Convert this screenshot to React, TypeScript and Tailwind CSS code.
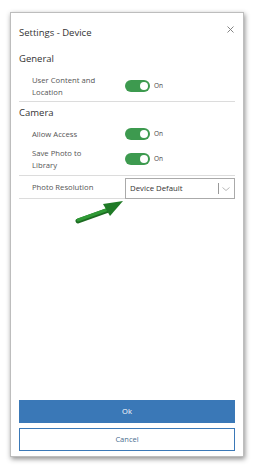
import React from "react";

const Toggle = () => (
  <div className="flex items-center gap-[4px]">
    <div className="w-[25px] h-[12px] rounded-full bg-[#3d9a4f] flex items-center justify-end pr-[2px]">
      <div className="w-[8px] h-[8px] rounded-full bg-white" />
    </div>
    <span className="text-[6.5px] text-[#444]">On</span>
  </div>
);

export default function App() {
  return (
    <div className="w-[254px] h-[469px] bg-white pt-[12px] pl-[10px] font-['Open_Sans',sans-serif]">
      <div className="relative w-[234px] h-[445px] bg-white border border-[#bdbdbd] shadow-[1px_2px_5px_rgba(0,0,0,0.45)] flex flex-col px-[8px]">
        {/* header */}
        <div className="flex items-start justify-between pt-[13px]">
          <span className="text-[9.5px] leading-[14px] text-[#333]">Settings - Device</span>
          <svg width="7" height="7" viewBox="0 0 7 7" className="mt-[0px] mr-[1px]">
            <path d="M0.5 0.5L6.5 6.5M6.5 0.5L0.5 6.5" stroke="#777" strokeWidth="0.9" />
          </svg>
        </div>

        <div className="mt-[12px] text-[9.5px] leading-[14px] text-[#333]">General</div>

        <div className="mt-[8px] pb-[3px] flex items-center border-b border-[#dcdcdc]">
          <div className="w-[106px] pl-[13px] text-[7.7px] leading-[12px] text-[#555]">
            User Content and
            <br />
            Location
          </div>
          <Toggle />
        </div>

        <div className="mt-[4px] text-[9.5px] leading-[14px] text-[#333]">Camera</div>

        <div className="mt-[8px] flex items-center">
          <div className="w-[106px] pl-[13px] text-[7.7px] leading-[12px] text-[#555]">Allow Access</div>
          <Toggle />
        </div>

        <div className="mt-[7px] pb-[4px] flex items-center border-b border-[#dcdcdc]">
          <div className="w-[106px] pl-[13px] text-[7.7px] leading-[12px] text-[#555]">
            Save Photo to
            <br />
            Library
          </div>
          <Toggle />
        </div>

        <div className="mt-[2px] flex items-start border-b border-[#dcdcdc]">
          <div className="w-[106px] pl-[13px] pt-[3px] text-[7.7px] leading-[12px] text-[#555]">Photo Resolution</div>
          <div className="flex-1 h-[21px] -mb-[1px] border border-[#aaa] bg-white flex items-center pl-[4px] pr-[3px]">
            <span className="flex-1 text-[7.8px] text-[#333]">Device Default</span>
            <div className="w-px h-[11px] bg-[#999]" />
            <svg width="10" height="6" viewBox="0 0 10 6" className="ml-[2px]">
              <path d="M1.5 1.5L5 4.5L8.5 1.5" stroke="#999" strokeWidth="0.7" fill="none" />
            </svg>
          </div>
        </div>

        <div className="flex-1" />

        <div className="flex flex-col gap-[5px] pb-[5px]">
          <div className="h-[23px] bg-[#3a78b7] flex items-center justify-center text-[7.5px] text-white">Ok</div>
          <div className="h-[23px] border border-[#3a78b7] flex items-center justify-center text-[7.5px] text-[#4a6d8f]">Cancel</div>
        </div>

        {/* annotation arrow */}
        <svg className="absolute left-[62px] top-[183px]" width="52" height="30" viewBox="0 0 52 30">
          <path d="M5 25L33 15" stroke="#1d6b22" strokeWidth="5" strokeLinecap="round" />
          <path d="M5 24L33 14" stroke="#2f9a35" strokeWidth="3" strokeLinecap="round" />
          <path d="M30 8L50 5L37 20Z" fill="#1f7a26" />
        </svg>
      </div>
    </div>
  );
}
